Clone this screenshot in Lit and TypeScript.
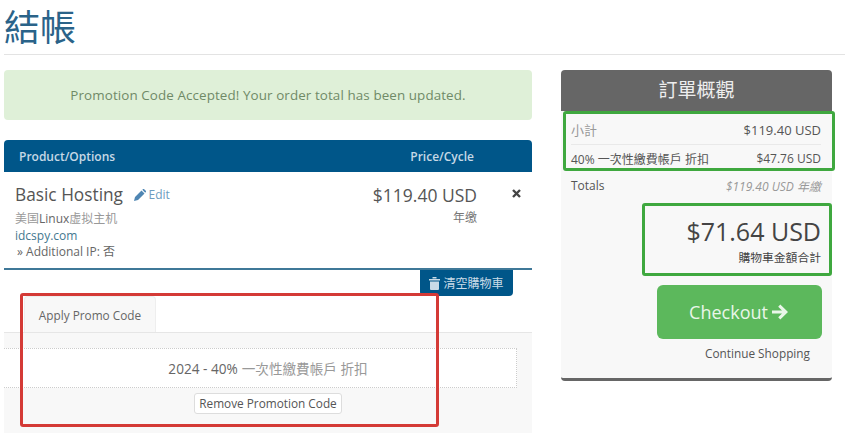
import { LitElement, html, css } from 'lit';
import { customElement } from 'lit/decorators.js';

@customElement('app-root')
export class AppRoot extends LitElement {
  static styles = css`
    :host {
      display: block;
      position: relative;
      width: 845px;
      height: 433px;
      overflow: hidden;
      background: #fff;
      font-family: 'Open Sans', 'Noto Sans CJK TC', sans-serif;
      color: #555;
      font-size: 12px;
    }

    .title {
      margin: 0 0 0 4px;
      height: 54px;
      font-size: 36px;
      font-weight: 400;
      line-height: 56px;
      color: #2a6389;
      border-bottom: 1px solid #e3e3e3;
    }

    .columns {
      display: flex;
      gap: 29px;
      padding: 15px 13px 0 4px;
    }

    .main {
      width: 528px;
      flex: none;
    }

    .alert {
      height: 50px;
      margin-bottom: 20px;
      display: flex;
      align-items: center;
      justify-content: center;
      background: #dff0d8;
      border-radius: 4px;
      font-size: 13.4px;
      color: #6f8a67;
      letter-spacing: 0.1px;
    }

    .head {
      display: flex;
      justify-content: space-between;
      height: 32px;
      padding: 0 58px 0 15px;
      align-items: center;
      background: #005689;
      border-radius: 4px 4px 0 0;
      color: #c6d9e6;
      font-size: 12px;
      font-weight: 600;
    }

    .item {
      display: flex;
      justify-content: space-between;
      height: 98px;
      padding: 10px 11px 0 11px;
      box-sizing: border-box;
      border-bottom: 2px solid #3f7898;
    }

    .name {
      font-size: 17.3px;
      line-height: 26px;
      color: #555;
      margin-bottom: 3px;
    }

    .edit {
      margin-left: 6px;
      font-size: 12px;
      color: #6d9cc0;
      display: inline-flex;
      align-items: center;
      gap: 3px;
    }

    .sub {
      font-size: 12px;
      line-height: 16.5px;
      color: #666;
    }

    .cjk {
      color: #999;
    }

    .domain {
      color: #44788f;
    }

    .addon {
      padding-left: 2px;
      color: #666;
    }

    .price-side {
      display: flex;
      gap: 35px;
    }

    .price {
      text-align: right;
      font-size: 17.5px;
      line-height: 26px;
    }

    .cycle {
      font-size: 12px;
      line-height: 16px;
      margin-top: 2px;
      color: #777;
    }

    .remove {
      padding-top: 3px;
    }

    .empty-row {
      display: flex;
      justify-content: flex-end;
      padding-right: 19px;
    }

    .empty {
      width: 93px;
      height: 26px;
      display: flex;
      align-items: center;
      justify-content: center;
      gap: 3px;
      background: #005689;
      border-radius: 0 0 4px 4px;
      color: #c9dbe7;
      font-size: 12px;
    }

    .tabs {
      height: 37px;
      padding-left: 20px;
      box-sizing: border-box;
      border-bottom: 1px solid #e6e6e6;
    }

    .tab {
      width: 132px;
      height: 36px;
      display: flex;
      align-items: center;
      justify-content: center;
      box-sizing: border-box;
      background: #f8f8f8;
      border: 1px solid #eee;
      border-bottom: none;
      border-radius: 4px 4px 0 0;
      font-size: 11.8px;
      color: #666;
    }

    .panel {
      height: 100px;
      padding-top: 15px;
      box-sizing: border-box;
      background: #f8f8f8;
      text-align: center;
    }

    .code {
      width: 513px;
      height: 40px;
      padding-left: 16px;
      display: flex;
      align-items: center;
      justify-content: center;
      gap: 0.3em;
      box-sizing: border-box;
      background: #fff;
      border: 1px dotted #ccc;
      border-left: none;
      font-size: 13.6px;
      color: #666;
    }

    .remove-code {
      display: block;
      margin: 5px 0 0 190px;
      width: 148px;
      height: 21px;
      line-height: 19px;
      box-sizing: border-box;
      background: #fff;
      border: 1px solid #ddd;
      border-radius: 3px;
      font-size: 11.8px;
      color: #555;
    }

    .side {
      width: 271px;
      height: 311px;
      flex: none;
      box-sizing: border-box;
      background: #f8f8f8;
      border-bottom: 3px solid #666;
      border-radius: 4px;
      overflow: hidden;
    }

    .side-head {
      height: 41px;
      padding-bottom: 3px;
      display: flex;
      align-items: center;
      justify-content: center;
      box-sizing: border-box;
      background: #666;
      color: #eee;
      font-size: 19px;
    }

    .rows {
      padding: 4px 11px 0 10px;
    }

    .row {
      display: flex;
      justify-content: space-between;
      align-items: center;
      font-size: 12px;
      color: #555;
    }

    .row.first {
      height: 29px;
      font-size: 13px;
      border-bottom: 1px solid #e9e9e9;
    }

    .row.first .label {
      color: #999;
    }

    .row.second {
      height: 27px;
    }

    .row.totals {
      height: 27px;
    }

    .muted {
      color: #999;
      font-style: italic;
      font-size: 12px;
    }

    .total {
      padding: 16px 11px 0 0;
      text-align: right;
    }

    .amount {
      font-size: 25px;
      line-height: 33px;
      color: #444;
    }

    .total-label {
      font-size: 11.8px;
      line-height: 18px;
      color: #444;
    }

    .checkout {
      width: 165px;
      height: 54px;
      margin: 19px 0 0 96px;
      display: flex;
      align-items: center;
      justify-content: center;
      gap: 4px;
      background: #5cb85c;
      border-radius: 6px;
      color: #e9f6e9;
      font-size: 18px;
    }

    .continue {
      margin: 5px 0 0 96px;
      width: 165px;
      text-align: center;
      font-size: 11.8px;
      line-height: 18px;
      padding-left: 36px;
      box-sizing: border-box;
      color: #555;
    }

    /* markup drawn over the page */
    .mark {
      position: absolute;
      box-sizing: border-box;
      border-radius: 3px;
    }

    .mark.red {
      left: 20px;
      top: 293px;
      width: 419px;
      height: 134px;
      border: 3px solid #d43a36;
    }

    .mark.green {
      border: 3px solid #3fa83f;
    }

    .mark.lines {
      left: 563px;
      top: 111px;
      width: 272px;
      height: 60px;
    }

    .mark.sum {
      left: 642px;
      top: 203px;
      width: 190px;
      height: 73px;
    }
  `;

  render() {
    return html`
      <h1 class="title">結帳</h1>
      <div class="columns">
        <div class="main">
          <div class="alert">Promotion Code Accepted! Your order total has been updated.</div>
          <div class="head"><span>Product/Options</span><span>Price/Cycle</span></div>
          <div class="item">
            <div>
              <div class="name">
                Basic Hosting
                <span class="edit">
                  <svg width="12" height="12" viewBox="0 0 12 12"><path fill="#4f86b3" d="M0 12l1-4 6.5-6.5 3 3L4 11zM8.3.8l.6-.6a1 1 0 0 1 1.3 0l1.600 1.600a1 1 0 0 1 0 1.3l-.6.6z"/></svg>Edit
                </span>
              </div>
              <div class="sub"><span class="cjk">美国</span>Linux<span class="cjk">虚拟主机</span></div>
              <div class="sub domain">idcspy.com</div>
              <div class="sub addon">» Additional IP: 否</div>
            </div>
            <div class="price-side">
              <div>
                <div class="price">$119.40 USD</div>
                <div class="price cycle">年缴</div>
              </div>
              <div class="remove">
                <svg width="9" height="9" viewBox="0 0 9 9"><path stroke="#444" stroke-width="2.4" d="M1 1l7 7M8 1L1 8"/></svg>
              </div>
            </div>
          </div>
          <div class="empty-row">
            <div class="empty">
              <svg width="11" height="13" viewBox="0 0 11 13"><path fill="#c9dbe7" d="M0 2h11v1.5H0zM3.500 0h4v1.5h-4zM1 4.5h9V12a1 1 0 0 1-1 1H2a1 1 0 0 1-1-1z"/></svg>
              清空購物車
            </div>
          </div>
          <div class="tabs"><div class="tab">Apply Promo Code</div></div>
          <div class="panel">
            <div class="code"><span>2024 - 40%</span><span class="cjk">一次性繳費帳戶 折扣</span></div>
            <span class="remove-code">Remove Promotion Code</span>
          </div>
        </div>
        <div class="side">
          <div class="side-head">訂單概觀</div>
          <div class="rows">
            <div class="row first"><span class="label">小計</span><span>$119.40 USD</span></div>
            <div class="row second"><span>40% 一次性繳費帳戶 折扣</span><span>$47.76 USD</span></div>
            <div class="row totals"><span>Totals</span><span class="muted">$119.40 USD 年繳</span></div>
          </div>
          <div class="total">
            <div class="amount">$71.64 USD</div>
            <div class="total-label">購物車金額合計</div>
          </div>
          <div class="checkout">
            Checkout
            <svg width="18" height="16" viewBox="0 0 18 16"><path fill="#e9f6e9" d="M0 6.500h10L6.200 2.700 8.300.6 16 8l-7.700 7.400-2.100-2.100L10 9.500H0z"/></svg>
          </div>
          <div class="continue">Continue Shopping</div>
        </div>
      </div>
      <div class="mark red"></div>
      <div class="mark green lines"></div>
      <div class="mark green sum"></div>
    `;
  }
}
